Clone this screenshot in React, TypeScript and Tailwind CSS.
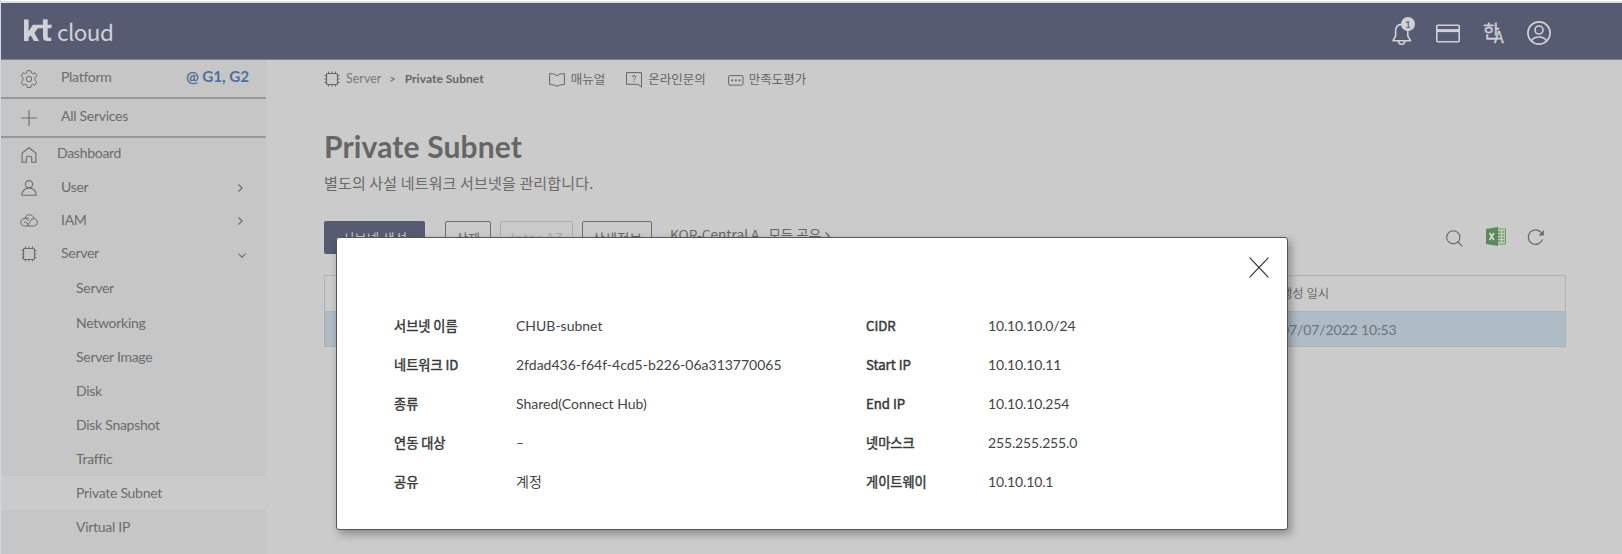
import React from "react";

const lato = "font-['Lato','Noto_Sans_CJK_KR',sans-serif]";
const noto = "font-['Noto_Sans_CJK_KR',sans-serif]";

type IconProps = { className?: string };

const Gear = ({ className }: IconProps) => (
  <svg className={className} width="18" height="18" viewBox="0 0 18 18" fill="none" stroke="currentColor" strokeWidth="1" strokeLinejoin="round">
    <path d="M7.200 .6h3.600l.5 2.300 1.300.8 2.300-.9 1.900 3-1.700 1.700q-.3 1.500 0 3l1.700 1.700-1.900 3-2.300-.9-1.300.8-.5 2.300H7.200l-.5-2.300-1.300-.8-2.300.9-1.900-3 1.700-1.700q.3-1.500 0-3L1.200 5.800l1.900-3 2.300.9 1.300-.8z" />
    <circle cx="9" cy="9" r="2.700" />
  </svg>
);
const Plus = () => (
  <svg width="16" height="16" viewBox="0 0 16 16" fill="none" stroke="currentColor" strokeWidth="1.100">
    <path d="M8 0v16M0 8h16" />
  </svg>
);
const Home = () => (
  <svg width="16" height="16" viewBox="0 0 16 16" fill="none" stroke="currentColor" strokeWidth="1.100" strokeLinejoin="round">
    <path d="M1.100 6 8 .8 14.900 6v9.300h-4.200v-4.600q0-1.500-1.500-1.500H6.800q-1.500 0-1.500 1.500v4.600H1.100z" />
  </svg>
);
const UserIcon = () => (
  <svg width="16" height="16" viewBox="0 0 16 16" fill="none" stroke="currentColor" strokeWidth="1.100">
    <circle cx="8" cy="4.200" r="3.600" />
    <path d="M.7 15.300q0-6 7.300-7.500 7.300 1.500 7.300 7.500z" strokeLinejoin="round" />
  </svg>
);
const Cloud = () => (
  <svg width="18" height="13" viewBox="0 0 18 13" fill="none" stroke="currentColor" strokeWidth="1" strokeLinecap="round" strokeLinejoin="round">
    <path d="M5 4.100C5.600 2 7.200.7 9.300.7c2.500 0 4.200 1.500 4.600 3.800 2.100.2 3.400 1.800 3.400 3.700 0 2.200-1.700 3.800-3.800 3.800h-9C2.300 12 .7 10.500.7 8.400c0-2 1.500-3.900 3.800-3.900 1.700 0 2.700.8 3.300 2M4.200 8.200q1.700-.6 2.800.8L9 11.800M13.900 4.500q-3 0-3.700 3.200l-2 2.700M5.200 4.300q2-1.200 4 .6" />
  </svg>
);
const Chip = ({ className }: IconProps) => (
  <svg className={className} width="16" height="16" viewBox="0 0 16 16" fill="none" stroke="currentColor" strokeWidth="1">
    <rect x="2.500" y="2.500" width="11" height="11" rx="1" strokeWidth="1.200" />
    <path d="M4.500 .5v2M8 .5v2M11.500 .5v2M4.500 13.500v2M8 13.500v2M11.500 13.500v2M.5 4.500h2M.5 8h2M.5 11.500h2M13.500 4.500h2M13.500 8h2M13.500 11.500h2" />
  </svg>
);
const ChevronR = ({ className }: IconProps) => (
  <svg className={className} width="5" height="8" viewBox="0 0 5 8" fill="none" stroke="currentColor" strokeWidth="1.100">
    <path d="m.5.500 3.700 3.500L.5 7.500" />
  </svg>
);
const ChevronD = ({ className }: IconProps) => (
  <svg className={className} width="8" height="5" viewBox="0 0 8 5" fill="none" stroke="currentColor" strokeWidth="1.100">
    <path d="m.4.600 3.600 3.600L7.600.6" />
  </svg>
);

const Logo = () => (
  <div className="flex h-[56px] items-start pl-[23px] text-[#d0d1d6]">
    <svg width="28" height="23" viewBox="0 0 28 23" className="mt-[16px]" fill="currentColor">
      <path d="M0 .4h4.600v11.800l4.300-6.400H28l-.8 3.500h-3.500v7.900q0 1.500 1.700 1.500h1.800V22h-3.800q-4.400 0-4.400-4.100V9.300h-5l-3.600 4.600 4.700 8.100H10L6.600 16.300l-2 2.500V22H0z" />
      <path d="M18.900 .4h4.800v6h-4.800z" />
    </svg>
    <span className={`${noto} ml-[5px] mt-[10px] text-[22.500px] leading-[37px] tracking-[-0.550px]`}>cloud</span>
  </div>
);

const Header = () => (
  <header className="flex h-[57px] shrink-0 justify-between border-b border-[#7b8096] bg-[#575b72]">
    <Logo />
    <div className="flex items-center pr-[71px] text-[#d0d1d6]">
      <div className="relative mt-[6px] h-[22px] w-[20px]">
        <svg width="20" height="22" viewBox="0 0 20 22" fill="none" stroke="currentColor" strokeWidth="1.600" strokeLinejoin="round">
          <path d="M.9 17.800 3.600 13V8.200Q3.600 1.500 9.700 1.400q6.100.1 6.100 6.800V13l2.800 4.800zM6.500 18q.2 3.300 3.200 3.300T12.900 18" />
        </svg>
        <span className={`${lato} absolute left-[9px] top-[-6px] flex size-[14px] items-center justify-center rounded-full bg-[#d0d1d6] text-[10px] leading-none text-[#50536a]`}>1</span>
      </div>
      <svg className="ml-[24px] mt-[4px]" width="24" height="19" viewBox="0 0 24 19" fill="none" stroke="currentColor" strokeWidth="1.600">
        <rect x=".8" y="1.200" width="22.400" height="16.600" rx="1" />
        <path d="M1 6.600h22" strokeWidth="3" />
      </svg>
      <div className={`${noto} relative ml-[23px] h-[24px] w-[22px]`}>
        <span className="absolute left-0 top-0 text-[18px] leading-[22px] [-webkit-text-stroke:0.300px_#d0d1d6]">한</span>
        <span className="absolute left-[11px] top-[7px] text-[16px] leading-[20px] [-webkit-text-stroke:0.300px_#d0d1d6]">A</span>
      </div>
      <svg className="ml-[22px] mt-[3px]" width="24" height="24" viewBox="0 0 24 24" fill="none" stroke="currentColor" strokeWidth="1.600">
        <circle cx="12" cy="12" r="11.100" />
        <circle cx="12" cy="9" r="4" />
        <path d="M4.200 20q2.300-4 7.800-4t7.800 4" />
      </svg>
    </div>
  </header>
);

const subItems = ["Server", "Networking", "Server Image", "Disk", "Disk Snapshot", "Traffic", "Private Subnet", "Virtual IP"];

const MenuRow = ({ icon, label, end }: { icon: React.ReactNode; label: string; end?: React.ReactNode }) => (
  <div className="flex h-[33px] items-center">
    <span className="ml-[19px] flex w-[18px] justify-center">{icon}</span>
    <span className="mb-[2px] ml-[23px] flex-1 leading-none">{label}</span>
    <span className="mr-[19px] flex w-[9px]">{end}</span>
  </div>
);

const Sidebar = () => (
  <nav className={`${lato} w-[265px] shrink-0 bg-[#c6c6c6] text-[14px] tracking-[-0.280px] text-[#6c6c6c]`}>
    <div className="flex h-[39px] items-center border-b-2 border-[#989898]">
      <Gear className="ml-[19px]" />
      <span className="mb-[3px] ml-[23px] flex-1 leading-none">Platform</span>
      <span className="mb-[3px] mr-[17px] text-[15.300px] font-bold leading-none tracking-[-0.100px] text-[#506f99]">@ G1, G2</span>
    </div>
    <div className="flex h-[39px] items-center border-b-2 border-[#989898]">
      <span className="ml-[20px]"><Plus /></span>
      <span className="mb-[4px] ml-[24px] leading-none">All Services</span>
    </div>
    <div className="flex h-[33px] items-center">
      <span className="ml-[20px]"><Home /></span>
      <span className="mb-[4px] ml-[20px] leading-none">Dashboard</span>
    </div>
    <MenuRow icon={<UserIcon />} label="User" end={<ChevronR />} />
    <MenuRow icon={<Cloud />} label="IAM" end={<ChevronR />} />
    <MenuRow icon={<Chip />} label="Server" end={<ChevronD className="mt-[4px]" />} />
    <ul className="pt-[1.400px]">
      {subItems.map((s) => (
        <li
          key={s}
          className={s === "Private Subnet" ? "flex h-[34.150px] items-center bg-[#cbcbcb] pl-[75px] leading-none" : "flex h-[34.150px] items-center pl-[75px] leading-none"}
        >
          {s}
        </li>
      ))}
    </ul>
  </nav>
);

const Breadcrumb = () => (
  <div className="flex h-[39px] items-center text-[12.500px] text-[#666]">
    <Chip className="mb-[1px]" />
    <span className="ml-[6px] text-[12.500px] text-[#7a7a7a]">Server</span>
    <span className="ml-[8px] text-[11px]">&gt;</span>
    <span className="ml-[9px] text-[12.100px] font-bold">Private Subnet</span>
    <svg className="ml-[65px]" width="16" height="14" viewBox="0 0 16 14" fill="none" stroke="currentColor" strokeWidth="1" strokeLinejoin="round">
      <path d="M8 3Q6.500.6.600.6v10.900Q6 11.500 8 13.300q2-1.800 7.400-1.800V.6Q9.500.6 8 3z" />
    </svg>
    <span className={`${noto} ml-[6px]`}>매뉴얼</span>
    <svg className="ml-[21px]" width="16" height="16" viewBox="0 0 16 16" fill="none" stroke="currentColor" strokeWidth="1" strokeLinejoin="round">
      <path d="M.5.600h15v14.600l-3.600-2.900H.5zM6.400 5q.1-1.400 1.600-1.400T9.600 5q0 .9-.8 1.300Q8 6.700 8 7.800M8 8.800v1.200" />
    </svg>
    <span className={`${noto} ml-[6px]`}>온라인문의</span>
    <svg className="ml-[22px] mt-[2px]" width="16" height="11" viewBox="0 0 16 11" fill="none" stroke="currentColor" strokeWidth="1">
      <rect x=".6" y=".6" width="14.400" height="9.500" rx="1.200" />
      <path d="M3.200 5.400h1.900M6.900 5.400h1.900M10.600 5.400h1.900" strokeWidth="1.900" />
    </svg>
    <span className={`${noto} ml-[5px]`}>만족도평가</span>
  </div>
);

const Toolbar = () => (
  <div className={`${noto} flex h-[33px] items-center text-[13px] text-[#666]`}>
    <button className="h-[33px] w-[101px] rounded-[2px] bg-[#575b72] pt-[1px] text-[13.500px] text-[#c8c8cc]">서브넷 생성</button>
    <button className="ml-[20px] h-[33px] w-[46px] rounded-[2px] border border-[#6e6e6e] pt-[1px]">삭제</button>
    <button className="ml-[9px] h-[33px] w-[73px] rounded-[2px] border border-[#aeaeae] pt-[1px] text-[14px] text-[#adadad]">Inter-AZ</button>
    <button className="ml-[9px] h-[33px] w-[70px] rounded-[2px] border border-[#6e6e6e] pt-[1px] text-[13.500px]">상세정보</button>
    <span className="mb-[5px] ml-[18px] text-[13.700px] leading-none">KOR-Central A</span>
    <span className="mb-[5px] ml-[9px] text-[13.500px] leading-none">모든 공유</span>
    <ChevronR className="mb-[3px] ml-[4px]" />
    <svg className="ml-auto mt-[1px]" width="17" height="17" viewBox="0 0 17 17" fill="none" stroke="currentColor" strokeWidth="1.100">
      <circle cx="7.300" cy="7.300" r="6.600" />
      <path d="m12 12 4.400 4.400" />
    </svg>
    <svg className="mb-[2px] ml-[23px]" width="21" height="19" viewBox="0 0 21 19">
      <path d="M10 2h9.500v15H10z" fill="#c6cec4" stroke="#6d9c68" strokeWidth="1" />
      <path d="M12 5h3M12 8h3M12 11h3M12 14h3M16 5h2.500M16 8h2.500M16 11h2.500M16 14h2.500" stroke="#6d9c68" strokeWidth="1.700" />
      <path d="M0 2 12 0v19L0 17z" fill="#5c895a" />
      <path d="m3.500 6 4.500 7M8 6l-4.500 7" stroke="#d5dcd4" strokeWidth="1.700" />
    </svg>
    <svg className="ml-[20px] mr-[22px]" width="18" height="17" viewBox="0 0 18 17" fill="none" stroke="currentColor" strokeWidth="1.200">
      <path d="M14.300 3.600A7.300 7.300 0 1 0 15.500 10.400" />
      <path d="M16.800 1v5.400h-5.300z" fill="currentColor" stroke="none" />
    </svg>
  </div>
);

const Table = () => (
  <div className="mt-[21px] w-[1242px] border border-[#b0b3b6] text-[#6a6a6a]">
    <div className={`${noto} flex h-[35px] items-center pl-[956px] text-[12.300px]`}>생성 일시</div>
    <div className="flex h-[35px] items-center border-t border-[#a9b4bd] bg-[#afbbc5] pl-[956px] text-[14px] tracking-[-0.100px] text-[#6b747d]">07/07/2022 10:53</div>
  </div>
);

const details = [
  ["서브넷 이름", "CHUB-subnet", "CIDR", "10.10.10.0/24"],
  ["네트워크 ID", "2fdad436-f64f-4cd5-b226-06a313770065", "Start IP", "10.10.10.11"],
  ["종류", "Shared(Connect Hub)", "End IP", "10.10.10.254"],
  ["연동 대상", "–", "넷마스크", "255.255.255.0"],
  ["공유", "계정", "게이트웨이", "10.10.10.1"],
];

const Term = ({ children }: { children: React.ReactNode }) => (
  <dt className={`${noto} text-[13.200px] text-[#383838] [-webkit-text-stroke:0.450px_#383838]`}>{children}</dt>
);

const Modal = () => (
  <div role="dialog" className="absolute left-[335px] top-[237px] h-[293px] w-[952px] rounded-[3px] border border-[#555] bg-white shadow-[3px_4px_9px_rgba(0,0,0,0.320)]">
    <div className="flex h-[68px] justify-end pr-[18px] pt-[19px]">
      <svg width="20" height="21" viewBox="0 0 20 21" fill="none" stroke="#333" strokeWidth="1.200">
        <path d="m.6.700 18.800 19.600M19.400.7.6 20.300" />
      </svg>
    </div>
    <dl className={`${lato} text-[14px] text-[#444]`}>
      {details.map(([a, b, c, d]) => (
        <div key={a} className="grid h-[39px] grid-cols-[122px_350px_122px_1fr] items-center pl-[57px] leading-none">
          <Term>{a}</Term>
          <dd>{b}</dd>
          <Term>{c}</Term>
          <dd className="tracking-[-0.150px]">{d}</dd>
        </div>
      ))}
    </dl>
  </div>
);

export default function App() {
  return (
    <div className={`${lato} relative flex h-[554px] w-[1622px] flex-col overflow-hidden border-l border-[#d0d7e6] bg-[#cbcbcb]`}>
      <div className="h-[3px] shrink-0 border-t border-white bg-[#dcdfea]" />
      <Header />
      <div className="flex min-h-0 flex-1">
        <Sidebar />
        <main className="flex-1 pl-[58px] pr-[55px]">
          <Breadcrumb />
          <h1 className="mt-[29px] text-[30px] font-bold leading-[36px] tracking-[0.150px] text-[#666]">Private Subnet</h1>
          <p className={`${noto} mb-[27px] mt-[8px] text-[15px] leading-[22px] tracking-[0.150px] text-[#6a6a6a]`}>별도의 사설 네트워크 서브넷을 관리합니다.</p>
          <Toolbar />
          <Table />
        </main>
      </div>
      <Modal />
    </div>
  );
}
